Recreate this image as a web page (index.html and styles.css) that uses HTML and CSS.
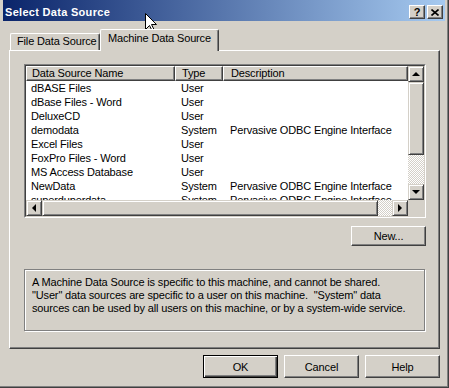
FILE: index.html
```
<!DOCTYPE html>
<html lang="en">
<head>
    <meta charset="UTF-8">
    <meta name="viewport" content="width=device-width, initial-scale=1.0">
    <title>Select Data Source</title>

    <link rel="stylesheet" href="styles.css">
</head>
<body>

    <div class="window">

        <div class="titlebar">
            <span class="title">Select Data Source</span>
            <div class="caption-btns">
                <span class="cbtn help">?</span>
                <span class="cbtn">
                    <svg width="8" height="7" viewBox="0 0 8 7">
                        <path d="M0.5 0.5 L7.5 6.5 M7.5 0.5 L0.5 6.5" stroke="#000" stroke-width="1.6"/>
                    </svg>
                </span>
            </div>
        </div>

        <div class="client">

            <div class="tabs">
                <div class="tab">File Data Source</div>
                <div class="tab active">Machine Data Source</div>
            </div>

            <div class="panel">

                <!-- list of data sources -->
                <div class="listview">
                    <div class="lv-inner">
                        <div class="lv-body">
                            <div class="lv-header">
                                <div class="hcell c1">Data Source Name</div>
                                <div class="hcell c2">Type</div>
                                <div class="hcell c3">Description</div>
                            </div>
                            <div class="lv-rows">
                                <div class="row"><span class="c1">dBASE Files</span><span class="c2">User</span><span class="c3"></span></div>
                                <div class="row"><span class="c1">dBase Files - Word</span><span class="c2">User</span><span class="c3"></span></div>
                                <div class="row"><span class="c1">DeluxeCD</span><span class="c2">User</span><span class="c3"></span></div>
                                <div class="row"><span class="c1">demodata</span><span class="c2">System</span><span class="c3">Pervasive ODBC Engine Interface</span></div>
                                <div class="row"><span class="c1">Excel Files</span><span class="c2">User</span><span class="c3"></span></div>
                                <div class="row"><span class="c1">FoxPro Files - Word</span><span class="c2">User</span><span class="c3"></span></div>
                                <div class="row"><span class="c1">MS Access Database</span><span class="c2">User</span><span class="c3"></span></div>
                                <div class="row"><span class="c1">NewData</span><span class="c2">System</span><span class="c3">Pervasive ODBC Engine Interface</span></div>
                                <div class="row"><span class="c1">superduperdata</span><span class="c2">System</span><span class="c3">Pervasive ODBC Engine Interface</span></div>
                            </div>
                        </div>

                        <div class="vscroll">
                            <div class="sbtn"><i class="arrow up"></i></div>
                            <div class="thumb vthumb"></div>
                            <div class="track"></div>
                            <div class="sbtn"><i class="arrow down"></i></div>
                        </div>

                        <div class="hscroll">
                            <div class="sbtn"><i class="arrow left"></i></div>
                            <div class="thumb hthumb"></div>
                            <div class="track"></div>
                            <div class="sbtn"><i class="arrow right"></i></div>
                        </div>

                        <div class="corner"></div>
                    </div>
                </div>

                <div class="new-row">
                    <button class="btn new">New...</button>
                </div>

                <div class="info">
                    A Machine Data Source is specific to this machine, and cannot be shared.<br>
                    "User" data sources are specific to a user on this machine. &nbsp;"System" data<br>
                    sources can be used by all users on this machine, or by a system-wide service.
                </div>

            </div>

            <div class="buttons">
                <button class="btn default">OK</button>
                <button class="btn">Cancel</button>
                <button class="btn">Help</button>
            </div>

        </div>

        <!-- mouse pointer sitting over the caption -->
        <svg class="cursor" width="13" height="20" viewBox="0 0 13 20">
            <path d="M0.5 0.5 L0.5 16.5 L4.5 12.5 L7.5 18.5 L9.5 17.5 L6.5 11.5 L11.5 11.5 Z" fill="#fff" stroke="#000" stroke-width="1"/>
        </svg>

    </div>

</body>
</html>
```

FILE: styles.css
```
body{
    margin: 0;
    font-family: "Liberation Sans", Arial, sans-serif;
    font-size: 11px;
    letter-spacing: -0.15px;
    color: #000;
}

.window{
    position: relative;
    width: 449px;
    height: 388px;
    box-sizing: border-box;
    padding: 0 3px 3px 3px;
    background: #d4d0c8;
    border-right: 1px solid #404040;
    border-bottom: 1px solid #404040;
    box-shadow: inset -1px -1px 0 #808080;
    overflow: hidden;
}

/* caption */
.titlebar{
    display: flex;
    height: 21px;
    padding: 3px 2px 0 2px;
    box-sizing: border-box;
    background: linear-gradient(to right, #0a246a, #a6caf0);
}
.title{
    color: #fff;
    font-weight: bold;
    line-height: 18px;
    letter-spacing: 0.3px;
}
.caption-btns{
    margin-left: auto;
    margin-top: 2px;
    display: flex;
    gap: 2px;
}
.cbtn{
    width: 16px;
    height: 14px;
    box-sizing: border-box;
    display: flex;
    align-items: center;
    justify-content: center;
    background: #d4d0c8;
    border: 1px solid;
    border-color: #fff #404040 #404040 #fff;
    box-shadow: inset -1px -1px 0 #808080;
    font-weight: bold;
    font-size: 11px;
    line-height: 12px;
}

.client{
    padding: 8px 5px 0 6px;
}

/* tabs */
.tabs{
    display: flex;
    align-items: flex-end;
    height: 21px;
    padding-left: 1px;
    position: relative;
    z-index: 1;
}
.tab{
    width: 90px;
    height: 17px;
    box-sizing: border-box;
    padding: 1px 0 0 6px;
    line-height: 13px;
    border-top: 1px solid #fff;
    border-left: 1px solid #fff;
    border-right: 1px solid #404040;
    box-shadow: inset -1px 0 0 #808080;
    border-radius: 2px 2px 0 0;
    white-space: nowrap;
}
.tab.active{
    width: 119px;
    height: 22px;
    margin-bottom: -1px;
    padding: 2px 0 0 7px;
    background: #d4d0c8;
}

.panel{
    height: 299px;
    box-sizing: border-box;
    padding: 13px 0 0 14px;
    border: 1px solid;
    border-color: #fff #404040 #404040 #fff;
    box-shadow: inset -1px -1px 0 #808080;
}

/* list view */
.listview{
    width: 402px;
    height: 154px;
    box-sizing: border-box;
    border: 1px solid;
    border-color: #808080 #fff #fff #808080;
}
.lv-inner{
    height: 100%;
    box-sizing: border-box;
    border: 1px solid;
    border-color: #404040 #d4d0c8 #d4d0c8 #404040;
    background: #fff;
    display: grid;
    grid-template-columns: 1fr 16px;
    grid-template-rows: 1fr 16px;
}
.lv-body{
    overflow: hidden;
}
.lv-header{
    display: flex;
    height: 15px;
}
.hcell{
    box-sizing: border-box;
    background: #d4d0c8;
    border-top: 1px solid #fff;
    border-left: 1px solid #fff;
    border-right: 1px solid #404040;
    border-bottom: 1px solid #404040;
    box-shadow: inset -1px -1px 0 #808080;
    line-height: 13px;
    padding-left: 5px;
    white-space: nowrap;
}
.c1{ width: 149px; flex: none; padding-left: 5px; box-sizing: border-box; }
.c2{ width: 48px; flex: none; padding-left: 6px; box-sizing: border-box; }
.c3{ flex: 1; padding-left: 7px; box-sizing: border-box; }

.row{
    display: flex;
    height: 14px;
    line-height: 14px;
    white-space: nowrap;
}

/* scroll bars */
.vscroll,
.hscroll{
    display: flex;
    background: #d4d0c8;
}
.vscroll{
    flex-direction: column;
}
.sbtn,
.thumb{
    flex: none;
    box-sizing: border-box;
    background: #d4d0c8;
    border: 1px solid;
    border-color: #d4d0c8 #404040 #404040 #d4d0c8;
    box-shadow: inset 1px 1px 0 #fff, inset -1px -1px 0 #808080;
}
.sbtn{
    width: 16px;
    height: 16px;
    display: flex;
    align-items: center;
    justify-content: center;
}
.vthumb{ height: 73px; }
.hthumb{ width: 336px; }
.track{
    flex: 1;
    background: conic-gradient(#fff 25%, #d4d0c8 0 50%, #fff 0 75%, #d4d0c8 0);
    background-size: 2px 2px;
}
.corner{
    background: #d4d0c8;
}

.arrow{
    width: 0;
    height: 0;
    border: 4px solid transparent;
}
.arrow.up{ border-bottom-color: #000; border-top-width: 0; margin-top: -1px; }
.arrow.down{ border-top-color: #000; border-bottom-width: 0; }
.arrow.left{ border-right-color: #000; border-left-width: 0; margin-left: -1px; }
.arrow.right{ border-left-color: #000; border-right-width: 0; }

/* buttons */
.btn{
    width: 75px;
    height: 23px;
    box-sizing: border-box;
    font-family: inherit;
    font-size: 11px;
    letter-spacing: inherit;
    color: #000;
    background: #d4d0c8;
    border: 1px solid;
    border-color: #fff #404040 #404040 #fff;
    box-shadow: inset -1px -1px 0 #808080;
    padding: 0;
}
.btn.default{
    border-color: #000;
    box-shadow: inset 1px 1px 0 #fff, inset -1px -1px 0 #404040, inset -2px -2px 0 #808080;
}

.new-row{
    display: flex;
    justify-content: flex-end;
    width: 402px;
    margin-top: 8px;
}
.btn.new{
    height: 20px;
}

.info{
    width: 401px;
    height: 62px;
    box-sizing: border-box;
    margin-top: 23px;
    padding: 6px 0 0 7px;
    line-height: 13px;
    border: 1px solid #808080;
    box-shadow: inset 1px 1px 0 #fff, 1px 1px 0 #fff;
    white-space: nowrap;
}

.buttons{
    display: flex;
    justify-content: flex-end;
    gap: 6px;
    margin-top: 6px;
}

.cursor{
    position: absolute;
    left: 145px;
    top: 13px;
}
```
